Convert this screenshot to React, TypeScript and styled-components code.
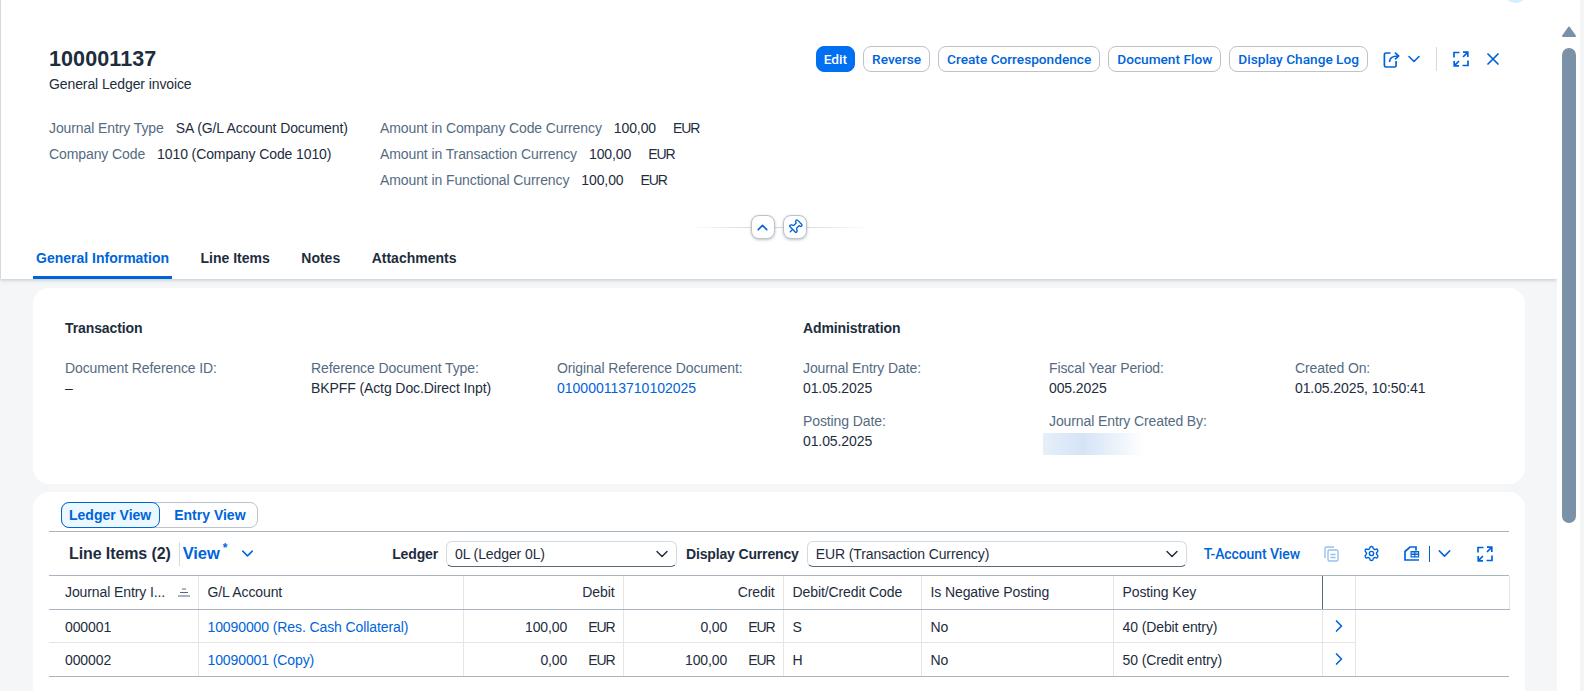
import React from 'react';
import styled, { createGlobalStyle } from 'styled-components';
import { ChevronDown, ChevronRight, ChevronUp, Pin, Settings, X } from 'lucide-react';

const BLUE = '#0064d9';
const TEXT = '#1d2d3e';
const LABEL = '#556b82';
const LINE = '#a9b4be';
const SOFT_LINE = '#e5e5e5';

const GlobalStyle = createGlobalStyle`
  html, body {
    margin: 0;
    height: 100%;
    overflow: hidden;
    background: #fff;
  }
  body {
    font-family: "Liberation Sans", Arial, sans-serif;
    font-size: 14px;
    letter-spacing: -0.1px;
    color: ${TEXT};
  }
`;

const FullScreenIcon = () => (
  <svg width="16" height="16" viewBox="0 0 16 16" fill="none" stroke={BLUE} strokeWidth="1.7">
    <path d="M1 6.5V1.5h5.5M15 9.5v5H9.5" />
    <path d="M10 1.2h4.8V6M14.6 1.4 10 6M1.2 10v4.8H6M1.4 14.6 6 10" />
  </svg>
);

const ActionIcon = () => (
  <svg width="17" height="17" viewBox="0 0 17 17" fill="none" stroke={BLUE} strokeWidth="1.7">
    <path d="M7.5 2H3a1.6 1.6 0 0 0-1.6 1.6v10.8A1.6 1.6 0 0 0 3 16h8.5a1.6 1.6 0 0 0 1.6-1.6V10" />
    <path d="M6.5 11c0-3.6 2.6-6 8.5-6M12 1.6 15.6 5 12 8.4" />
  </svg>
);

const CopyIcon = () => (
  <svg width="15" height="16" viewBox="0 0 15 16" fill="none" stroke={BLUE} strokeWidth="1.4" opacity="0.4">
    <path d="M1 12V2.5A1.5 1.5 0 0 1 2.5 1H10" />
    <rect x="4" y="4" width="10" height="11" rx="1.5" />
    <path d="M6.5 8.5h5M6.5 11.5h5" />
  </svg>
);

const ExportIcon = () => (
  <svg width="16" height="15" viewBox="0 0 16 15" fill="none" stroke={BLUE} strokeWidth="1.7">
    <path d="M12 4.5V1H6L1 5.5V14h14" />
    <rect x="6.5" y="5" width="8.7" height="6.5" fill={BLUE} stroke="none" />
    <path d="M7.6 7h2.6M11.4 7H14M7.6 9.6h2.6M11.4 9.6H14" stroke="#fff" strokeWidth="1.2" />
  </svg>
);

const SortIcon = () => (
  <svg width="12" height="9" viewBox="0 0 12 9" fill="none" stroke={LABEL} strokeWidth="1">
    <path d="M4 1h4M2 4.5h8M0 8h12" />
  </svg>
);

const ScrollArrow = () => (
  <svg width="14" height="11" viewBox="0 0 14 11" fill="#7b91a8" stroke="#7b91a8" strokeWidth="2" strokeLinejoin="round">
    <path d="M7 1.5 13 10H1Z" />
  </svg>
);

const Page = styled.div`
  display: flex;
  width: 1584px;
  height: 691px;
  overflow: hidden;
  position: relative;
`;

const Avatar = styled.div`
  position: absolute;
  top: -22px;
  left: 1503px;
  width: 25px;
  height: 25px;
  border-radius: 50%;
  background: #d1efff;
  z-index: 2;
`;

const Main = styled.main`
  flex: 0 0 1557px;
  display: flex;
  flex-direction: column;
  background: #f5f6f7;
  overflow: hidden;
`;

const Scrollbar = styled.aside`
  flex: 1;
  box-sizing: border-box;
  display: flex;
  flex-direction: column;
  padding: 26px 0 0 5px;
  gap: 11px;
  border-right: 4px solid #f4f5f6;
  background: #fff;
`;

const ScrollThumb = styled.div`
  width: 14px;
  height: 475px;
  flex: none;
  border-radius: 7px;
  background: #7b91a8;
`;

const Header = styled.header`
  box-sizing: border-box;
  height: 279px;
  flex: none;
  display: flex;
  flex-direction: column;
  background: #fff;
  border-left: 1px solid #d9d9d9;
  box-shadow: 0 1px 4px rgba(85, 107, 130, 0.35);
  position: relative;
  z-index: 1;
`;

const TitleRow = styled.div`
  display: flex;
  justify-content: space-between;
  align-items: flex-start;
  padding: 46px 54px 0 48px;
  height: 69px;
`;

const Title = styled.h1`
  margin: 0;
  font-size: 21.5px;
  line-height: 26px;
  font-weight: 700;
  letter-spacing: 0.1px;
`;

const Subtitle = styled.div`
  font-size: 14px;
  line-height: 20px;
  margin-top: 2px;
`;

const Actions = styled.div`
  display: flex;
  align-items: center;
  height: 26px;
`;

const ActionButton = styled.button<{ $primary?: boolean }>`
  height: 26px;
  box-sizing: border-box;
  padding: 0 ${p => (p.$primary ? '7px' : '8px')};
  margin-right: 8px;
  border-radius: 8px;
  border: 1px solid ${p => (p.$primary ? '#0070f2' : '#bcc3ca')};
  background: ${p => (p.$primary ? '#0070f2' : '#fff')};
  color: ${p => (p.$primary ? '#fff' : BLUE)};
  font: 500 13.67px Roboto, "Liberation Sans", sans-serif;
  white-space: nowrap;
`;

const IconSlot = styled.span<{ $left?: number }>`
  display: inline-flex;
  align-items: center;
  color: ${BLUE};
  margin-left: ${p => p.$left ?? 0}px;
`;

const ActionDivider = styled.span`
  width: 1px;
  height: 24px;
  background: #d9d9d9;
  margin-left: 12px;
`;

const DataRow = styled.div`
  display: flex;
  padding-left: 48px;
`;

const DataColumn = styled.div<{ $width: number }>`
  width: ${p => p.$width}px;
  display: flex;
  flex-direction: column;
`;

const DataLine = styled.div`
  height: 26px;
  display: flex;
  align-items: center;
  gap: 12px;
  white-space: nowrap;
`;

const DataLabel = styled.span`
  color: ${LABEL};
`;

const Amount = styled.span`
  display: inline-flex;
  gap: 17px;
`;

const Currency = styled.span`
  letter-spacing: -1.1px;
`;

const Expander = styled.div`
  display: flex;
  justify-content: center;
  align-items: center;
  gap: 8px;
  height: 24px;
  margin-top: 22px;
  margin-left: -1px;
  position: relative;
`;

const ExpanderLine = styled.span`
  position: absolute;
  left: 50%;
  top: 11.5px;
  width: 178px;
  height: 1px;
  transform: translateX(-50%);
  background: linear-gradient(90deg, transparent, #d9d9d9 35%, #d9d9d9 65%, transparent);
`;

const ExpanderButton = styled.button`
  width: 24px;
  height: 24px;
  padding: 0;
  box-sizing: border-box;
  display: flex;
  align-items: center;
  justify-content: center;
  border: 1px solid #bcc3ca;
  border-radius: 8px;
  background: #fff;
  color: ${BLUE};
  box-shadow: 0 1px 3px rgba(85, 107, 130, 0.4);
  position: relative;
`;

const TiltedPin = styled(Pin)`
  transform: rotate(45deg);
`;

const Tabs = styled.nav`
  display: flex;
  height: 40px;
  padding-left: 32px;
  gap: 25.5px;
`;

const Tab = styled.a<{ $active?: boolean }>`
  box-sizing: border-box;
  display: flex;
  align-items: center;
  padding: 1px 3px 0;
  font-weight: 700;
  font-size: 14px;
  letter-spacing: 0;
  color: ${p => (p.$active ? BLUE : TEXT)};
  border-bottom: 3px solid ${p => (p.$active ? BLUE : 'transparent')};
`;

const Content = styled.div`
  display: flex;
  flex-direction: column;
  gap: 8px;
  padding: 9px 32px 0 33px;
  flex: 1;
  min-height: 0;
`;

const InfoCard = styled.section`
  box-sizing: border-box;
  height: 196px;
  flex: none;
  display: flex;
  padding: 30px 32px 0;
  background: #fff;
  border-radius: 16px;
`;

const InfoSection = styled.div`
  flex: 0 0 738px;
`;

const SectionTitle = styled.h3`
  margin: 0 0 20px;
  font-size: 14px;
  line-height: 20px;
  font-weight: 700;
`;

const FieldGrid = styled.div`
  display: grid;
  grid-template-columns: repeat(3, 246px);
  row-gap: 13px;
`;

const Field = styled.div`
  line-height: 20px;
  white-space: nowrap;
`;

const FieldLabel = styled.div`
  color: ${LABEL};
`;

const FieldLink = styled.a`
  color: ${BLUE};
  letter-spacing: 0;
`;

const Blurred = styled.div`
  width: 101px;
  height: 22px;
  margin: 2px 0 0 -6px;
  background: linear-gradient(90deg, #e6eff9, #d5e4f6 40%, #ffffff 100%);
`;

const TableCard = styled.section`
  flex: 1;
  box-sizing: border-box;
  padding: 10px 16px 0;
  background: #fff;
  border-radius: 16px 16px 0 0;
`;

const Segmented = styled.div`
  display: inline-flex;
  box-sizing: border-box;
  height: 26px;
  width: 197px;
  margin-left: 12px;
  border: 1px solid #bcc3ca;
  border-radius: 8px;
  vertical-align: top;
`;

const Segment = styled.button<{ $selected?: boolean }>`
  box-sizing: content-box;
  height: 24px;
  margin: -1px 0 -1px ${p => (p.$selected ? '-1px' : '0')};
  padding: ${p => (p.$selected ? '0 8px 0 7px' : '0 13px')};
  border: 1px solid ${p => (p.$selected ? BLUE : 'transparent')};
  border-radius: 8px;
  background: ${p => (p.$selected ? '#ebf8ff' : 'transparent')};
  color: ${BLUE};
  font: 700 14px "Liberation Sans", Arial, sans-serif;
  white-space: nowrap;
`;

const Toolbar = styled.div`
  box-sizing: border-box;
  height: 45px;
  margin-top: 3px;
  display: flex;
  align-items: center;
  padding: 0 16px 0 20px;
  border-top: 1px solid ${LINE};
  border-bottom: 1px solid ${LINE};
`;

const ToolbarTitle = styled.h2`
  margin: 0;
  font-size: 16px;
  font-weight: 700;
  white-space: nowrap;
`;

const ToolbarDivider = styled.span`
  width: 1px;
  height: 24px;
  background: #d9d9d9;
  margin: 0 3px 0 8px;
`;

const VariantName = styled.span`
  font-size: 16.5px;
  font-weight: 700;
  color: ${BLUE};
  display: inline-flex;
`;

const VariantMark = styled.sup`
  font-size: 12px;
  line-height: 8px;
  margin: 0 0 0 3px;
`;

const FilterGroup = styled.div`
  display: flex;
  align-items: center;
  margin-left: auto;
`;

const FilterLabel = styled.span`
  font-weight: 700;
  letter-spacing: -0.15px;
  white-space: nowrap;
  margin-right: 8px;
`;

const SelectBox = styled.div<{ $width: number }>`
  box-sizing: border-box;
  width: ${p => p.$width}px;
  height: 26px;
  margin-right: 9px;
  display: flex;
  align-items: center;
  justify-content: space-between;
  padding: 0 4px 0 8px;
  border: 1px solid #d5dadd;
  border-bottom-color: ${LABEL};
  border-radius: 6px;
`;

const ToolbarLink = styled.a`
  margin: 0 16px 0 8px;
  color: ${BLUE};
  font: 500 14px Roboto, "Liberation Sans", sans-serif;
  white-space: nowrap;
`;

const ToolbarDivide = styled.span`
  width: 1px;
  height: 16px;
  background: ${BLUE};
  margin-left: 9px;
`;

const Table = styled.table`
  width: 1460px;
  table-layout: fixed;
  border-collapse: collapse;
  font-size: 14px;
  border-bottom: 1px solid ${LINE};
`;

const HeadCell = styled.th<{ $align?: string; $edge?: boolean }>`
  box-sizing: border-box;
  height: 33px;
  padding: 0 8px 0 9px;
  font-weight: 400;
  white-space: nowrap;
  text-align: ${p => p.$align ?? 'left'};
  border-bottom: 1px solid ${LINE};
  border-right: ${p => (p.$edge ? `1px solid ${LABEL}` : `1px solid ${SOFT_LINE}`)};
`;

const FirstHead = styled.span`
  display: flex;
  align-items: center;
  justify-content: space-between;
  padding-left: 7px;
`;

const Cell = styled.td<{ $last?: boolean; $align?: string }>`
  box-sizing: border-box;
  height: ${p => (p.$last ? 34 : 33)}px;
  padding: ${p => (p.$last ? '1px' : '2px')} 8px 0 9px;
  white-space: nowrap;
  text-align: ${p => p.$align ?? 'left'};
  border-right: 1px solid ${SOFT_LINE};
  border-bottom: 1px solid ${p => (p.$last ? LINE : SOFT_LINE)};
`;

const FirstCell = styled(Cell)`
  padding-left: 16px;
`;

const SpacerCell = styled.td`
  border: none;
`;

const ArrowCell = styled(Cell)`
  padding: 0 0 0 6px;
  color: ${BLUE};
  line-height: 0;
`;

const Money = styled.span`
  display: inline-block;
  width: 62px;
  text-align: right;
  margin-right: 21px;
`;

const RowLink = styled.a`
  color: ${BLUE};
`;

const rows = [
  { id: '000001', account: '10090000 (Res. Cash Collateral)', debit: '100,00', credit: '0,00', code: 'S', key: '40 (Debit entry)' },
  { id: '000002', account: '10090001 (Copy)', debit: '0,00', credit: '100,00', code: 'H', key: '50 (Credit entry)' },
];

const columns = [149, 265, 160, 160, 138, 192, 209, 33, 154];

const App: React.FC = () => (
  <>
    <GlobalStyle />
    <Page>
      <Avatar />
      <Main>
        <Header>
          <TitleRow>
            <div>
              <Title>100001137</Title>
              <Subtitle>General Ledger invoice</Subtitle>
            </div>
            <Actions>
              <ActionButton $primary>Edit</ActionButton>
              <ActionButton>Reverse</ActionButton>
              <ActionButton>Create Correspondence</ActionButton>
              <ActionButton>Document Flow</ActionButton>
              <ActionButton>Display Change Log</ActionButton>
              <IconSlot $left={7}><ActionIcon /></IconSlot>
              <IconSlot $left={4}><ChevronDown size={20} strokeWidth={1.9} /></IconSlot>
              <ActionDivider />
              <IconSlot $left={16}><FullScreenIcon /></IconSlot>
              <IconSlot $left={14}><X size={20} strokeWidth={2.1} /></IconSlot>
            </Actions>
          </TitleRow>
          <DataRow>
            <DataColumn $width={331}>
              <DataLine><DataLabel>Journal Entry Type</DataLabel><span>SA (G/L Account Document)</span></DataLine>
              <DataLine><DataLabel>Company Code</DataLabel><span>1010 (Company Code 1010)</span></DataLine>
            </DataColumn>
            <DataColumn $width={400}>
              <DataLine><DataLabel>Amount in Company Code Currency</DataLabel><Amount><span>100,00</span><Currency>EUR</Currency></Amount></DataLine>
              <DataLine><DataLabel>Amount in Transaction Currency</DataLabel><Amount><span>100,00</span><Currency>EUR</Currency></Amount></DataLine>
              <DataLine><DataLabel>Amount in Functional Currency</DataLabel><Amount><span>100,00</span><Currency>EUR</Currency></Amount></DataLine>
            </DataColumn>
          </DataRow>
          <Expander>
            <ExpanderLine />
            <ExpanderButton><ChevronUp size={17} strokeWidth={2.2} /></ExpanderButton>
            <ExpanderButton><TiltedPin size={16} strokeWidth={2} /></ExpanderButton>
          </Expander>
          <Tabs>
            <Tab $active>General Information</Tab>
            <Tab>Line Items</Tab>
            <Tab>Notes</Tab>
            <Tab>Attachments</Tab>
          </Tabs>
        </Header>
        <Content>
          <InfoCard>
            <InfoSection>
              <SectionTitle>Transaction</SectionTitle>
              <FieldGrid>
                <Field><FieldLabel>Document Reference ID:</FieldLabel>–</Field>
                <Field><FieldLabel>Reference Document Type:</FieldLabel>BKPFF (Actg Doc.Direct Inpt)</Field>
                <Field><FieldLabel>Original Reference Document:</FieldLabel><FieldLink>010000113710102025</FieldLink></Field>
              </FieldGrid>
            </InfoSection>
            <InfoSection>
              <SectionTitle>Administration</SectionTitle>
              <FieldGrid>
                <Field><FieldLabel>Journal Entry Date:</FieldLabel>01.05.2025</Field>
                <Field><FieldLabel>Fiscal Year Period:</FieldLabel>005.2025</Field>
                <Field><FieldLabel>Created On:</FieldLabel>01.05.2025, 10:50:41</Field>
                <Field><FieldLabel>Posting Date:</FieldLabel>01.05.2025</Field>
                <Field><FieldLabel>Journal Entry Created By:</FieldLabel><Blurred /></Field>
              </FieldGrid>
            </InfoSection>
          </InfoCard>
          <TableCard>
            <Segmented>
              <Segment $selected>Ledger View</Segment>
              <Segment>Entry View</Segment>
            </Segmented>
            <Toolbar>
              <ToolbarTitle>Line Items (2)</ToolbarTitle>
              <ToolbarDivider />
              <VariantName>View<VariantMark>*</VariantMark></VariantName>
              <IconSlot $left={11}><ChevronDown size={19} strokeWidth={1.9} /></IconSlot>
              <FilterGroup>
                <FilterLabel>Ledger</FilterLabel>
                <SelectBox $width={231}>0L (Ledger 0L)<ChevronDown size={20} strokeWidth={1.7} /></SelectBox>
                <FilterLabel>Display Currency</FilterLabel>
                <SelectBox $width={380}>EUR (Transaction Currency)<ChevronDown size={20} strokeWidth={1.7} /></SelectBox>
                <ToolbarLink>T-Account View</ToolbarLink>
                <IconSlot $left={8}><CopyIcon /></IconSlot>
                <IconSlot $left={24}><Settings size={17} strokeWidth={2} /></IconSlot>
                <IconSlot $left={24}><ExportIcon /></IconSlot>
                <ToolbarDivide />
                <IconSlot $left={4}><ChevronDown size={21} strokeWidth={1.7} /></IconSlot>
                <IconSlot $left={22}><FullScreenIcon /></IconSlot>
              </FilterGroup>
            </Toolbar>
            <Table>
              <colgroup>
                {columns.map((w, i) => <col key={i} style={{ width: w }} />)}
              </colgroup>
              <thead>
                <tr>
                  <HeadCell><FirstHead>Journal Entry I...<SortIcon /></FirstHead></HeadCell>
                  <HeadCell>G/L Account</HeadCell>
                  <HeadCell $align="right">Debit</HeadCell>
                  <HeadCell $align="right">Credit</HeadCell>
                  <HeadCell>Debit/Credit Code</HeadCell>
                  <HeadCell>Is Negative Posting</HeadCell>
                  <HeadCell $edge>Posting Key</HeadCell>
                  <HeadCell />
                  <HeadCell />
                </tr>
              </thead>
              <tbody>
                {rows.map((r, i) => {
                  const last = i === rows.length - 1;
                  return (
                    <tr key={r.id}>
                      <FirstCell $last={last}>{r.id}</FirstCell>
                      <Cell $last={last}><RowLink>{r.account}</RowLink></Cell>
                      <Cell $last={last} $align="right"><Money>{r.debit}</Money><Currency>EUR</Currency></Cell>
                      <Cell $last={last} $align="right"><Money>{r.credit}</Money><Currency>EUR</Currency></Cell>
                      <Cell $last={last}>{r.code}</Cell>
                      <Cell $last={last}>No</Cell>
                      <Cell $last={last}>{r.key}</Cell>
                      <ArrowCell $last={last}><ChevronRight size={20} strokeWidth={2} /></ArrowCell>
                      <SpacerCell />
                    </tr>
                  );
                })}
              </tbody>
            </Table>
          </TableCard>
        </Content>
      </Main>
      <Scrollbar>
        <ScrollArrow />
        <ScrollThumb />
      </Scrollbar>
    </Page>
  </>
);

export default App;
